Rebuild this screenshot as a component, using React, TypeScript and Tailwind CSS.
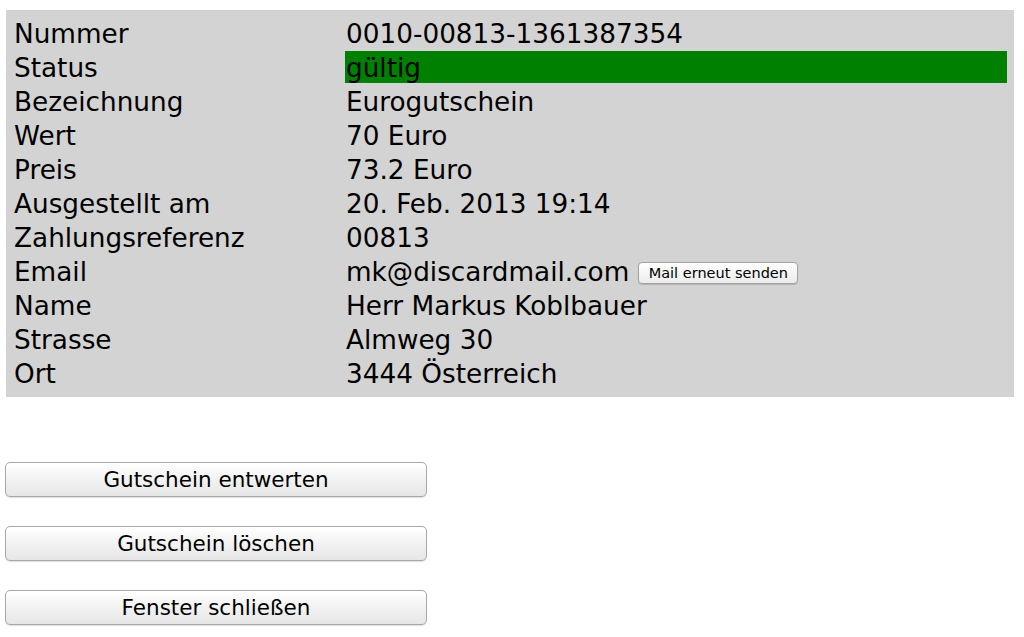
import React from "react";

const rows: [string, string][] = [
  ["Nummer", "0010-00813-1361387354"],
  ["Status", "gültig"],
  ["Bezeichnung", "Eurogutschein"],
  ["Wert", "70 Euro"],
  ["Preis", "73.2 Euro"],
  ["Ausgestellt am", "20. Feb. 2013 19:14"],
  ["Zahlungsreferenz", "00813"],
  ["Email", "mk@discardmail.com"],
  ["Name", "Herr Markus Koblbauer"],
  ["Strasse", "Almweg 30"],
  ["Ort", "3444 Österreich"],
];

const BigButton = ({ children }: { children: React.ReactNode }) => (
  <button className="w-[422px] h-[35px] rounded-[5px] border border-[#a9a9a9] bg-gradient-to-b from-white to-[#e6e6e6] text-[21.5px] text-black shadow-[0_1px_1px_rgba(0,0,0,0.12)] leading-none">
    {children}
  </button>
);

export default function App() {
  return (
    <div className="min-h-[637px] bg-white font-['DejaVu_Sans',sans-serif] text-black pt-[10px] pl-[6px]">
      <div className="w-[1008px] bg-[#d3d3d3] px-[7px] pt-[7px] pb-[8px] grid grid-cols-[330px_1fr] gap-[2px] text-[26.3px] leading-[30px]">
        {rows.map(([label, value]) => (
          <React.Fragment key={label}>
            <div className="pl-[1px] pt-[2px]">{label}</div>
            <div
              className={
                label === "Status"
                  ? "pl-[1px] pt-[2px] bg-[#008000]"
                  : "pl-[1px] pt-[2px] flex items-center"
              }
            >
              <span>{value}</span>
              {label === "Email" && (
                <button className="ml-[9px] mt-[2px] w-[160px] h-[22px] rounded-[4px] border border-[#a3a3a3] bg-gradient-to-b from-white to-[#ececec] text-[14.5px] leading-none text-black shadow-[0_1px_1px_rgba(0,0,0,0.15)]">
                  Mail erneut senden
                </button>
              )}
            </div>
          </React.Fragment>
        ))}
      </div>
      <div className="flex flex-col gap-[29px] mt-[65px] -ml-[1px]">
        <BigButton>Gutschein entwerten</BigButton>
        <BigButton>Gutschein löschen</BigButton>
        <BigButton>Fenster schließen</BigButton>
      </div>
    </div>
  );
}
